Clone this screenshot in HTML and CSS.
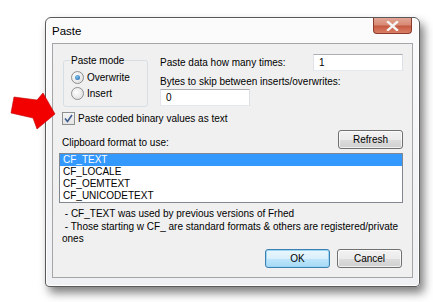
FILE: index.html
```html
<!DOCTYPE html>
<html lang="en">
<head>
    <meta charset="UTF-8">
    <title>Paste</title>
    <link rel="stylesheet" href="styles.css">
</head>
<body>
    <div class="window">
        <div class="titlebar">
            <span class="title">Paste</span>
            <button class="close-btn" aria-label="Close">
                <svg width="13" height="10" viewBox="0 0 13 10">
                    <path d="M2 1 L11 9 M11 1 L2 9" stroke="#f4f4f4" stroke-width="2.4" stroke-linecap="square"/>
                </svg>
            </button>
        </div>
        <div class="client">
            <div class="top-row">
                <fieldset class="mode-box">
                    <legend>Paste mode</legend>
                    <div class="radio-line"><span class="radio checked"></span>Overwrite</div>
                    <div class="radio-line"><span class="radio"></span>Insert</div>
                </fieldset>
                <div class="counts">
                    <div class="count-line">
                        <span>Paste data how many times:</span>
                        <span class="field field-times">1</span>
                    </div>
                    <div class="count-label">Bytes to skip between inserts/overwrites:</div>
                    <div class="field field-skip">0</div>
                </div>
            </div>
            <div class="check-line">
                <span class="checkbox">
                    <svg width="9" height="9" viewBox="0 0 9 9">
                        <path d="M1 4.5 L3.5 7.5 L8 1" fill="none" stroke="#3c5a8c" stroke-width="1.6"/>
                    </svg>
                </span>
                Paste coded binary values as text
            </div>
            <div class="format-row">
                <span class="format-label">Clipboard format to use:</span>
                <button class="btn">Refresh</button>
            </div>
            <ul class="format-list">
                <li class="selected">CF_TEXT</li>
                <li>CF_LOCALE</li>
                <li>CF_OEMTEXT</li>
                <li>CF_UNICODETEXT</li>
            </ul>
            <p class="notes">&nbsp;- CF_TEXT was used by previous versions of Frhed<br>&nbsp;- Those starting w CF_ are standard formats &amp; others are registered/private ones</p>
            <div class="actions">
                <button class="btn btn-default">OK</button>
                <button class="btn">Cancel</button>
            </div>
        </div>
    </div>

    <svg class="pointer" width="60" height="55" viewBox="0 80 60 55">
        <polygon points="14,97 37,100 43,93 55,114 37,129 33,118 11,113" fill="#f20000" stroke="#c00000" stroke-width="0.6"/>
    </svg>
</body>
</html>
```

FILE: styles.css
```css
body {
    margin: 0;
    background-color: #ffffff;
    font-family: "Liberation Sans", Arial, sans-serif;
    font-size: 10px;
    color: #000;
    width: 433px;
    height: 302px;
    overflow: hidden;
}
.window {
    margin: 17px 0 0 45px;
    width: 375px;
    height: 270px;
    box-sizing: border-box;
    border: 1px solid #5a5a5a;
    border-radius: 6px 6px 4px 4px;
    padding: 0 6px 8px 6px;
    background: linear-gradient(#fbfbfc, #eef0f3);
    box-shadow: 4px 6px 10px rgba(0, 0, 0, 0.5), inset 0 0 0 1px #ffffff;
    display: flex;
    flex-direction: column;
}
.titlebar {
    height: 25px;
    display: flex;
    justify-content: space-between;
    align-items: flex-start;
}
.title {
    font-size: 11.5px;
    line-height: 14px;
    padding-top: 6px;
}
.close-btn {
    width: 39px;
    height: 16px;
    margin-right: 1px;
    padding: 0;
    border: 1px solid #8c3a2e;
    border-top: none;
    border-radius: 0 0 4px 4px;
    background: linear-gradient(#e3a596 0%, #d88a75 45%, #c65a42 55%, #d97f66 100%);
    display: flex;
    align-items: center;
    justify-content: center;
}
.client {
    flex: 1;
    border: 1px solid #a5a5a5;
    background-color: #f0f0f0;
    padding: 0 9px 9px 6px;
    display: flex;
    flex-direction: column;
}
.top-row {
    display: flex;
    align-items: flex-start;
    margin-top: 10px;
}
.mode-box {
    margin: 0 0 0 4px;
    width: 85px;
    height: 53px;
    box-sizing: border-box;
    border: 1px solid #d5dfe5;
    border-radius: 3px;
    padding: 2px 0 0 7px;
}
.mode-box legend {
    padding: 0 1px;
    margin-left: -1px;
    line-height: 13px;
}
.radio-line {
    display: flex;
    align-items: center;
    height: 16px;
}
.radio {
    width: 11px;
    height: 11px;
    border: 1px solid #8e8f8f;
    border-radius: 50%;
    background: radial-gradient(circle at 40% 40%, #ffffff, #d8d8d8);
    margin-right: 3px;
    display: flex;
    align-items: center;
    justify-content: center;
}
.radio.checked::after {
    content: "";
    width: 5px;
    height: 5px;
    border-radius: 50%;
    background: radial-gradient(circle at 40% 35%, #7fc4f0, #1d5ea1);
}
.counts {
    flex: 1;
    margin-left: 12px;
}
.count-line {
    display: flex;
    justify-content: space-between;
    align-items: center;
    height: 17px;
}
.count-label {
    margin-top: 4px;
    line-height: 13px;
}
.field {
    box-sizing: border-box;
    height: 17px;
    background: #fff;
    border: 1px solid #abadb3;
    border-color: #abadb3 #dbdfe6 #e3e9ef #e2e3ea;
    padding-left: 5px;
    line-height: 15px;
}
.field-times {
    width: 90px;
}
.field-skip {
    width: 90px;
    margin-top: 1px;
}
.check-line {
    display: flex;
    align-items: center;
    margin: 5px 0 0 3px;
    height: 13px;
}
.checkbox {
    width: 11px;
    height: 11px;
    border: 1px solid #8e8f8f;
    background: linear-gradient(#f4f4f4, #e4e4e4);
    margin-right: 3px;
    display: flex;
    align-items: center;
    justify-content: center;
}
.format-row {
    display: flex;
    justify-content: space-between;
    align-items: flex-end;
    margin: 5px 0 0 3px;
}
.format-label {
    line-height: 13px;
}
.btn {
    font-family: inherit;
    font-size: inherit;
    color: #000;
    width: 65px;
    height: 19px;
    padding: 0;
    border: 1px solid #707070;
    border-radius: 3px;
    background: linear-gradient(#f2f2f2 0%, #ebebeb 50%, #dddddd 51%, #cfcfcf 100%);
    box-shadow: inset 0 0 0 1px rgba(255, 255, 255, 0.7);
}
.btn-default {
    border-color: #3c7fb1;
    box-shadow: inset 0 0 0 1px #9bd6f5;
    background: linear-gradient(#eaf6fd 0%, #d9f0fc 50%, #bee6fd 51%, #a7d9f5 100%);
}
.format-list {
    list-style: none;
    margin: 4px 0 0 0;
    padding: 0;
    height: 50px;
    box-sizing: border-box;
    border: 1px solid #828790;
    background: #fff;
}
.format-list li {
    height: 12px;
    line-height: 12px;
    padding-left: 3px;
}
.format-list li.selected {
    background-color: #3399ff;
    color: #fff;
}
.notes {
    margin: 5px 0 0 3px;
    width: 340px;
    line-height: 12.5px;
}
.actions {
    margin-top: auto;
    display: flex;
    justify-content: flex-end;
    gap: 7px;
    padding-right: 1px;
}
.pointer {
    position: absolute;
    left: 0;
    top: 80px;
}
```
